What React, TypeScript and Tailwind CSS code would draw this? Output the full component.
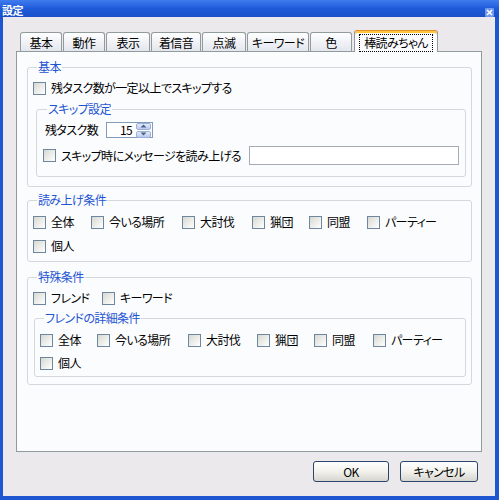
import React from 'react';
import clsx from 'clsx';

function Check({ label, w }: { label: string; w?: string }) {
    return (
        <label className={clsx('flex h-4 items-center gap-[5px] shrink-0', w)}>
            <span className="h-[13px] w-[13px] shrink-0 border border-[#6f86a0] bg-gradient-to-br from-[#d8d8d2] to-white" />
            <span className="whitespace-nowrap">{label}</span>
        </label>
    );
}

function Group({ title, className, children }: { title: string; className?: string; children: React.ReactNode }) {
    return (
        <fieldset className={clsx('rounded-[3px] border border-[#d3d8dc]', className)}>
            <legend className="ml-[4px] px-[1px] leading-[12px] text-[#1d54d2]">{title}</legend>
            {children}
        </fieldset>
    );
}

function Tab({ label, w }: { label: string; w: string }) {
    return (
        <div className={clsx('flex h-[19px] items-center justify-center rounded-t-[3px] border border-b-0 border-[#919b9c] bg-gradient-to-b from-white to-[#e3e6ee] pt-[1px]', w)}>
            {label}
        </div>
    );
}

function Spin() {
    return (
        <div className="flex w-[15px] flex-col gap-[1px]">
            {[0, 1].map((i) => (
                <div key={i} className="flex h-[7px] items-center justify-center rounded-[2px] border border-[#9db0d8] bg-gradient-to-b from-[#e4ebfa] to-[#b9caef]">
                    <svg width="7" height="4" viewBox="0 0 7 4">
                        <path d={i === 0 ? 'M0.5 3.5 L3.5 0.5 L6.5 3.5 Z' : 'M0.5 0.5 L3.5 3.5 L6.5 0.5 Z'} fill="#4d6185" />
                    </svg>
                </div>
            ))}
        </div>
    );
}

function Button({ label, w }: { label: string; w: string }) {
    return (
        <button className={clsx('h-[21px] rounded-[3px] border border-[#2b466e] bg-gradient-to-b from-white via-[#f2f1ec] to-[#d6d5cf] text-black', w)}>
            {label}
        </button>
    );
}

export default function App() {
    return (
        <div className="flex h-[500px] w-[499px] flex-col bg-[#1e55d0] px-[3px] pb-[4px] pr-[4px] font-['Noto_Sans_CJK_JP',sans-serif] text-[12px] leading-none tracking-[-0.6px] text-black [font-feature-settings:'palt']">
            {/* title bar */}
            <div className="-mx-[3px] -mr-[4px] flex h-[17px] items-start justify-between bg-gradient-to-b from-[#3f7cf0] via-[#1f5bd9] to-[#1a4fc8] pl-[2px] pr-[5px] pt-[5px]">
                <span className="text-[11px] font-bold leading-[11px] text-white">設定</span>
                <span className="mt-[3px] flex h-[9px] w-[9px] items-center justify-center rounded-[1px] bg-[#6f97ea]">
                    <svg width="7" height="7" viewBox="0 0 7 7">
                        <path d="M1 1 L6 6 M6 1 L1 6" stroke="white" strokeWidth="1.6" />
                    </svg>
                </span>
            </div>

            <div className="flex flex-1 flex-col bg-[#ece9ec] pb-[14px] pt-[13px]">
                {/* tabs */}
                <div className="ml-[17px] flex h-[21px] items-end gap-[1px]">
                    <Tab label="基本" w="w-[42px]" />
                    <Tab label="動作" w="w-[42px]" />
                    <Tab label="表示" w="w-[44px]" />
                    <Tab label="着信音" w="w-[50px]" />
                    <Tab label="点滅" w="w-[44px]" />
                    <Tab label="キーワード" w="w-[62px]" />
                    <Tab label="色" w="w-[42px]" />
                    <div className="relative z-10 -mb-[1px] ml-[1px] flex h-[22px] w-[84px] items-center justify-center rounded-t-[3px] border border-b-0 border-[#919b9c] border-t-[#e68b2c] bg-[#fcfcfe] shadow-[inset_0_2px_0_#ffc73c]">
                        <span className="mt-[2px] border border-dotted border-black px-[4px] py-[2px]">棒読みちゃん</span>
                    </div>
                </div>

                {/* panel */}
                <div className="ml-[13px] h-[401px] w-[466px] border border-[#919b9c] bg-[#fbfcfe] pl-[10px] pr-[9px] pt-[9px]">
                    <Group title="基本" className="pb-[9px] pl-[5px] pr-[5px]">
                        <div className="mt-[7px]">
                            <Check label="残タスク数が一定以上でスキップする" />
                        </div>
                        <Group title="スキップ設定" className="ml-[3px] mt-[7px] pb-[11px] pl-[6px]">
                            <div className="mt-[7px] flex h-4 items-center">
                                <span className="ml-[2px] w-[61px]">残タスク数</span>
                                <div className="flex h-4 w-[47px] items-center justify-end gap-[4px] border border-[#7f9db9] bg-white pr-[1px]">
                                    <span>15</span>
                                    <Spin />
                                </div>
                            </div>
                            <div className="mt-[8px] flex h-[19px] items-center justify-between pr-[6px]">
                                <Check label="スキップ時にメッセージを読み上げる" />
                                <div className="h-[19px] w-[210px] border border-[#a5acb5] bg-white" />
                            </div>
                        </Group>
                    </Group>

                    <Group title="読み上げ条件" className="mt-[7px] pb-[7px] pl-[5px]">
                        <div className="mt-[8px] flex">
                            <Check label="全体" w="w-[58px]" />
                            <Check label="今いる場所" w="w-[91px]" />
                            <Check label="大討伐" w="w-[70px]" />
                            <Check label="猟団" w="w-[57px]" />
                            <Check label="同盟" w="w-[58px]" />
                            <Check label="パーティー" />
                        </div>
                        <div className="mt-[8px]">
                            <Check label="個人" />
                        </div>
                    </Group>

                    <Group title="特殊条件" className="mt-[9px] pb-[7px] pl-[5px] pr-[5px]">
                        <div className="mt-[7px] flex">
                            <Check label="フレンド" w="w-[69px]" />
                            <Check label="キーワード" />
                        </div>
                        <Group title="フレンドの詳細条件" className="ml-[1px] mt-[6px] pb-[5px] pl-[5px]">
                            <div className="mt-[8px] flex">
                                <Check label="全体" w="w-[57px]" />
                                <Check label="今いる場所" w="w-[91px]" />
                                <Check label="大討伐" w="w-[69px]" />
                                <Check label="猟団" w="w-[57px]" />
                                <Check label="同盟" w="w-[59px]" />
                                <Check label="パーティー" />
                            </div>
                            <div className="mt-[7px]">
                                <Check label="個人" />
                            </div>
                        </Group>
                    </Group>
                </div>

                {/* buttons */}
                <div className="mt-[9px] flex justify-end gap-[11px] pr-[17px]">
                    <Button label="OK" w="w-[76px]" />
                    <Button label="キャンセル" w="w-[78px]" />
                </div>
            </div>
        </div>
    );
}
